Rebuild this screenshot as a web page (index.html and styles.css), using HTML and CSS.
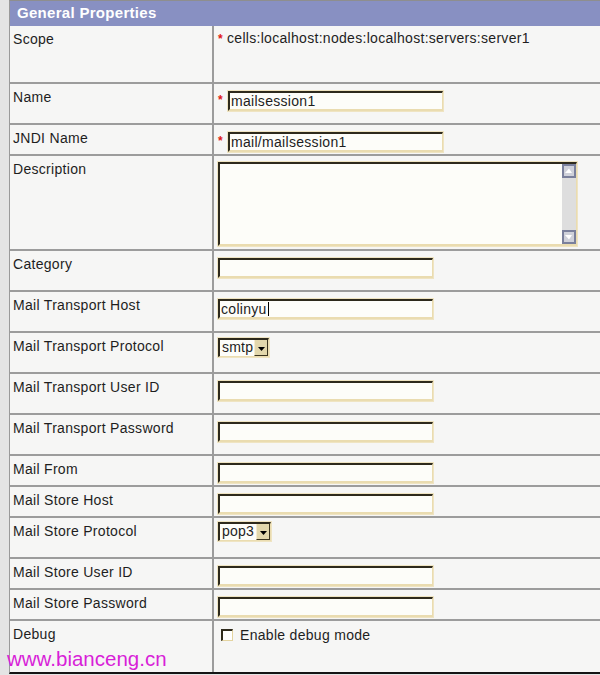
FILE: index.html
```html
<!DOCTYPE html>
<html>
<head>
<meta charset="utf-8">
<title>General Properties</title>
<link rel="stylesheet" href="styles.css">
</head>
<body>
<div class="page">
  <div class="panel">
    <div class="header">General Properties</div>

    <div class="row h58">
      <div class="label">Scope</div>
      <div class="value"><span class="req">*</span><span class="text">cells:localhost:nodes:localhost:servers:server1</span></div>
    </div>
    <div class="row h41">
      <div class="label">Name</div>
      <div class="value"><span class="req req-field">*</span><div class="field">mailsession1</div></div>
    </div>
    <div class="row h31">
      <div class="label">JNDI Name</div>
      <div class="value"><span class="req req-field">*</span><div class="field">mail/mailsession1</div></div>
    </div>
    <div class="row h95">
      <div class="label">Description</div>
      <div class="value">
        <div class="textarea">
          <div class="scrollbar">
            <div class="sb-btn"><svg width="10" height="10" viewBox="0 0 10 10"><path d="M1 7 L5 2.5 L8 7 Z" fill="#ffffff"/></svg></div>
            <div class="sb-btn"><svg width="10" height="10" viewBox="0 0 10 10"><path d="M1 3 L8 3 L5 7.5 Z" fill="#ffffff"/></svg></div>
          </div>
        </div>
      </div>
    </div>
    <div class="row h41">
      <div class="label">Category</div>
      <div class="value"><div class="field"></div></div>
    </div>
    <div class="row h41">
      <div class="label">Mail Transport Host</div>
      <div class="value"><div class="field">colinyu<span class="caret"></span></div></div>
    </div>
    <div class="row h41">
      <div class="label">Mail Transport Protocol</div>
      <div class="value"><div class="select sel-smtp"><span class="sel-text">smtp</span><span class="sel-btn"><svg width="7" height="4" viewBox="0 0 7 4"><path d="M0 0 H7 L3.5 4 Z" fill="#000"/></svg></span></div></div>
    </div>
    <div class="row h41">
      <div class="label">Mail Transport User ID</div>
      <div class="value"><div class="field"></div></div>
    </div>
    <div class="row h41">
      <div class="label">Mail Transport Password</div>
      <div class="value"><div class="field"></div></div>
    </div>
    <div class="row h31">
      <div class="label">Mail From</div>
      <div class="value"><div class="field"></div></div>
    </div>
    <div class="row h31">
      <div class="label">Mail Store Host</div>
      <div class="value"><div class="field"></div></div>
    </div>
    <div class="row h41">
      <div class="label">Mail Store Protocol</div>
      <div class="value"><div class="select sel-pop3"><span class="sel-text">pop3</span><span class="sel-btn"><svg width="7" height="4" viewBox="0 0 7 4"><path d="M0 0 H7 L3.5 4 Z" fill="#000"/></svg></span></div></div>
    </div>
    <div class="row h31">
      <div class="label">Mail Store User ID</div>
      <div class="value"><div class="field"></div></div>
    </div>
    <div class="row h31">
      <div class="label">Mail Store Password</div>
      <div class="value"><div class="field"></div></div>
    </div>
    <div class="row h51 last">
      <div class="label">Debug</div>
      <div class="value"><span class="checkbox"></span><span class="check-label">Enable debug mode</span></div>
    </div>
  </div>
  <div class="watermark">www.bianceng.cn</div>
</div>
</body>
</html>
```

FILE: styles.css
```css
html, body {
  margin: 0;
  padding: 0;
  background: #e4e4e4;
}

body {
  font-family: "Liberation Sans", Arial, sans-serif;
  font-size: 14px;
  letter-spacing: 0.3px;
  color: #1e1e1e;
}

.page {
  position: relative;
  width: 600px;
  height: 675px;
  overflow: hidden;
  background: #e4e4e4;
}

.panel {
  margin-left: 9px;
  width: 620px;
  border-left: 1px solid #9a9a9a;
  border-top: 1px solid #8e8e8e;
  border-bottom: 2px solid #151515;
  background: #f6f6f5;
}

.header {
  height: 25px;
  box-sizing: border-box;
  padding: 3px 0 0 7px;
  background: #8890c2;
  color: #ffffff;
  font-weight: bold;
  font-size: 15px;
  letter-spacing: 0.3px;
  line-height: 17px;
}

.row {
  display: flex;
  box-sizing: border-box;
  border-bottom: 2px solid #9c9c9c;
}

.row.last {
  border-bottom: none;
}

.h58 { height: 58px; }
.h41 { height: 41px; }
.h31 { height: 31px; }
.h95 { height: 95px; }
.h51 { height: 51px; }

.label {
  width: 204px;
  flex: none;
  box-sizing: border-box;
  border-right: 2px solid #9c9c9c;
  padding: 5px 0 0 3px;
  line-height: 16px;
  color: #1e1e1e;
}

.value {
  flex: 1;
  display: flex;
  align-items: flex-start;
  padding: 6px 0 0 3px;
  line-height: 15px;
}

.req {
  width: 9px;
  margin-left: 1px;
  flex: none;
  color: #e01818;
  font-weight: bold;
  font-size: 12px;
  line-height: 15px;
}

.req-field {
  margin-top: 3px;
}

.text {
  margin-top: -1px;
  color: #1e1e1e;
}

.check-label {
  margin-top: 1px;
  color: #1e1e1e;
}

.field {
  width: 215px;
  height: 20px;
  margin: 1px 0 0 1px;
  box-sizing: border-box;
  border-style: solid;
  border-width: 2px 1px 2px 2px;
  border-color: #2e2a1c #eadcb0 #eadcb0 #2e2a1c;
  box-shadow: 0 0 0 1px #efe4c2;
  background: #fdfdf9;
  padding-left: 1px;
  font-size: 14px;
  line-height: 16px;
  color: #1e1e1e;
  white-space: nowrap;
}

.caret {
  display: inline-block;
  width: 1px;
  height: 14px;
  margin-left: 1px;
  vertical-align: -2px;
  background: #000;
}

.textarea {
  width: 359px;
  height: 84px;
  margin: 0 0 0 1px;
  box-sizing: border-box;
  border-style: solid;
  border-width: 2px 1px 2px 2px;
  border-color: #2e2a1c #eadcb0 #eadcb0 #2e2a1c;
  box-shadow: 0 0 0 1px #efe4c2;
  background: #fdfdf9;
  display: flex;
  justify-content: flex-end;
}

.scrollbar {
  width: 14px;
  display: flex;
  flex-direction: column;
  justify-content: space-between;
  background: #dedede;
}

.sb-btn {
  width: 14px;
  height: 14px;
  box-sizing: border-box;
  border: 2px solid #7a809c;
  background: #cfd1da;
  display: flex;
  align-items: center;
  justify-content: center;
}

.select {
  height: 19px;
  margin: -1px 0 0 1px;
  box-sizing: border-box;
  display: flex;
  border-style: solid;
  border-width: 2px 1px 1px 2px;
  border-color: #2e2a1c #eadcb0 #eadcb0 #2e2a1c;
  box-shadow: 0 0 0 1px #efe4c2;
  background: #fdfdf9;
}

.sel-smtp { width: 51px; }
.sel-pop3 { width: 53px; margin-top: -2px; }

.sel-text {
  flex: 1;
  padding-left: 2px;
  font-size: 14px;
  letter-spacing: 0.2px;
  line-height: 15px;
  color: #1e1e1e;
  overflow: hidden;
  white-space: nowrap;
}

.sel-btn {
  width: 14px;
  flex: none;
  box-sizing: border-box;
  background: #e2d7ac;
  border-right: 1px solid #3a3420;
  border-bottom: 1px solid #3a3420;
  border-left: 1px solid #f4ecd0;
  display: flex;
  align-items: center;
  justify-content: center;
  padding-top: 2px;
}

.checkbox {
  width: 12px;
  height: 12px;
  flex: none;
  box-sizing: border-box;
  margin: 2px 7px 0 4px;
  border-style: solid;
  border-width: 2px 1px 1px 2px;
  border-color: #2e2a1c #e4d4a0 #e4d4a0 #2e2a1c;
  background: #ffffff;
}

.watermark {
  position: absolute;
  left: 7px;
  top: 647px;
  font-family: "Liberation Sans", Arial, sans-serif;
  font-size: 20.5px;
  letter-spacing: 0;
  line-height: 23px;
  color: #d81fd8;
}
```
